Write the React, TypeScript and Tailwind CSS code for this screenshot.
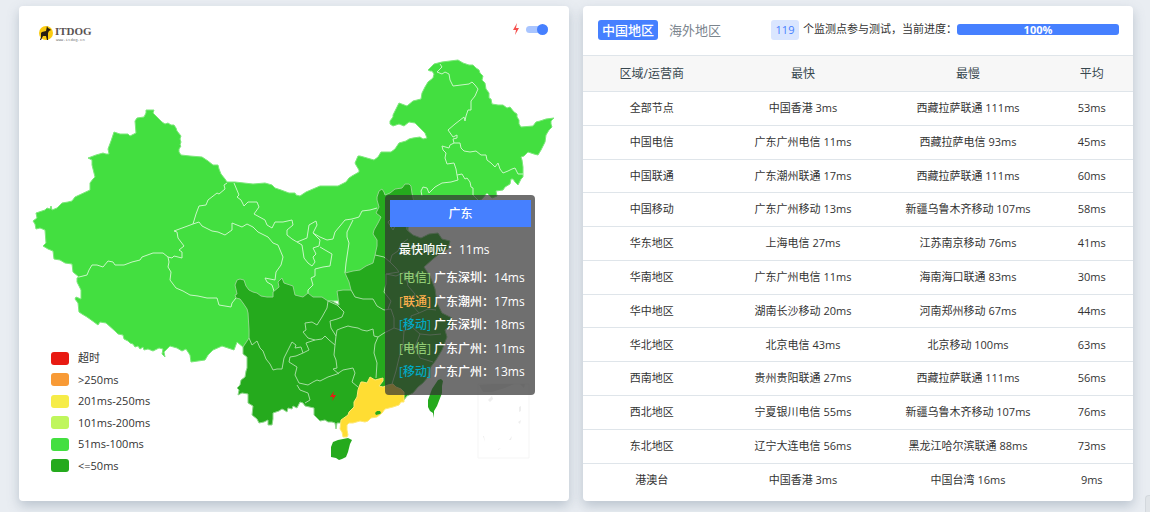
import React, { useState } from "react";

const rows = [
  ["全部节点", "中国香港 3ms", "西藏拉萨联通 111ms", "53ms"],
  ["中国电信", "广东广州电信 11ms", "西藏拉萨电信 93ms", "45ms"],
  ["中国联通", "广东潮州联通 17ms", "西藏拉萨联通 111ms", "60ms"],
  ["中国移动", "广东广州移动 13ms", "新疆乌鲁木齐移动 107ms", "58ms"],
  ["华东地区", "上海电信 27ms", "江苏南京移动 76ms", "41ms"],
  ["华南地区", "广东广州电信 11ms", "海南海口联通 83ms", "30ms"],
  ["华中地区", "湖南长沙移动 20ms", "河南郑州移动 67ms", "44ms"],
  ["华北地区", "北京电信 43ms", "北京移动 100ms", "63ms"],
  ["西南地区", "贵州贵阳联通 27ms", "西藏拉萨联通 111ms", "56ms"],
  ["西北地区", "宁夏银川电信 55ms", "新疆乌鲁木齐移动 107ms", "76ms"],
  ["东北地区", "辽宁大连电信 56ms", "黑龙江哈尔滨联通 88ms", "73ms"],
  ["港澳台", "中国香港 3ms", "中国台湾 16ms", "9ms"],
];

const legend = [
  { color: "bg-[#e81a12]", label: "超时" },
  { color: "bg-[#f89a36]", label: ">250ms" },
  { color: "bg-[#f6ec48]", label: "201ms-250ms" },
  { color: "bg-[#bff65c]", label: "101ms-200ms" },
  { color: "bg-[#43df40]", label: "51ms-100ms" },
  { color: "bg-[#25aa1d]", label: "<=50ms" },
];

const lines = [
  { isp: "电信", color: "text-[#91cc75]", city: "广东深圳", ms: 14 },
  { isp: "联通", color: "text-[#ffb04d]", city: "广东潮州", ms: 17 },
  { isp: "移动", color: "text-[#00a9c4]", city: "广东深圳", ms: 18 },
  { isp: "电信", color: "text-[#91cc75]", city: "广东广州", ms: 11 },
  { isp: "移动", color: "text-[#00a9c4]", city: "广东广州", ms: 13 },
];

// north and west, 51ms-100ms
const lightArea =
  "146,110 154,110 153,113 157,117 159,119 162,122 165,124 168,123 171,125 174,125 176,128 177,131 181,136 180,139 181,142 180,145 181,146 179,149 179,152 181,155 190,156 202,157 208,161 213,165 218,165 219,169 221,174 225,179 227,182 235,182 244,183 253,184 265,183 272,185 275,188 281,190 289,193 295,193 296,195 300,196 306,192 313,189 320,186 338,186 346,182 349,178 352,176 359,172 359,170 356,165 355,163 358,156 360,156 374,160 378,157 381,152 391,152 395,149 397,146 399,143 406,141 409,139 413,138 420,137 423,139 427,138 425,133 420,128 415,123 409,122 404,126 399,124 393,126 390,124 390,121 393,117 393,115 396,109 399,103 407,106 413,101 421,99 422,93 425,87 428,82 433,78 434,74 432,71 430,71 428,70 434,64 442,62 450,61 458,60 463,63 469,65 473,65 476,68 479,70 480,73 483,76 482,80 485,83 486,89 489,93 489,98 491,99 492,104 498,105 503,105 507,108 510,107 514,112 517,114 517,117 519,120 519,124 521,127 533,126 536,122 540,121 546,119 554,118 551,121 551,124 552,127 549,130 546,135 545,142 541,150 538,155 534,154 528,152 524,156 521,157 522,160 523,167 523,177 521,179 518,185 515,182 513,179 511,179 510,184 505,187 503,190 496,191 497,196 492,198 487,193 482,199 470,206 455,216 440,214 425,222 408,227 408,240 375,300 328,301 280,310 249,343 243,347 237,342 234,350 228,348 222,346 213,350 208,355 205,360 191,362 190,355 186,349 182,351 177,348 170,346 164,352 165,357 162,354 163,349 159,348 153,351 148,349 144,350 143,347 140,349 138,346 135,347 133,344 130,343 128,341 124,339 123,335 118,334 115,331 106,323 100,322 98,325 94,322 87,317 82,314 79,312 78,303 75,299 76,297 81,299 81,290 77,282 77,278 79,277 73,272 72,264 65,263 60,260 54,259 53,251 48,249 43,246 46,243 45,230 40,228 36,229 35,224 33,221 37,218 36,213 45,210 47,208 50,209 51,206 52,210 57,208 62,203 68,202 72,201 75,197 90,190 90,183 93,179 95,177 92,165 92,160 88,158 96,155 103,153 106,154 109,154 108,149 111,141 114,132 120,134 128,134 130,136 134,134 136,133 135,121 137,118 144,117 146,113";

// south and east, <=50ms
const darkArea =
  "377,200 377,197 379,191 382,189 384,192 385,195 390,193 395,189 402,188 405,184 409,184 411,186 412,193 413,198 415,206 412,216 405,222 407,230 413,235 421,238 429,234 438,233 442,239 450,241 448,249 439,254 433,259 424,267 430,276 435,289 437,303 442,313 452,318 452,325 445,330 447,337 442,350 436,360 430,368 428,377 423,383 418,387 413,393 407,396 404,400 395,400 380,400 366,405 347,420 341,423 337,423 336,429 335,423 332,422 328,422 325,420 320,421 314,415 314,408 305,406 303,403 300,402 297,408 293,406 292,409 288,408 287,412 284,410 282,409 279,411 273,413 273,419 272,425 268,425 268,420 264,422 259,423 257,419 252,415 253,406 248,403 248,394 242,393 238,395 239,390 237,388 240,385 241,380 245,377 246,371 247,368 247,357 243,354 243,347 247,341 249,338 249,330 248,313 247,309 243,303 240,299 236,298 235,295 237,294 235,285 237,280 240,279 244,280 246,286 249,290 253,292 257,293 261,296 267,297 273,297 273,292 279,287 278,282 282,278 284,283 293,286 295,295 303,297 308,293 313,297 322,297 328,301 332,301 339,305 338,298 337,291 343,290 351,290 349,282 345,273 353,271 360,270 366,266 373,263 375,255 377,246 377,240 373,234 374,230 378,223 381,217 376,213 379,207";

const guangdong =
  "359,387 361,382 363,382 367,383 369,379 370,377 375,380 383,378 383,381 379,386 383,387 388,385 393,384 396,387 401,389 404,392 404,398 404,402 401,402 399,405 393,407 385,409 382,413 377,417 371,418 368,421 365,422 360,421 353,423 349,423 347,425 347,430 348,435 347,437 343,437 342,432 340,429 341,420 348,415 349,412 354,407 354,402 357,397 358,390";

const lightBorders = [
  "79,277 83,276 87,275 89,270 92,265 97,265 103,267 108,261 113,262 115,265 124,265 132,262 140,260 142,257 153,253 163,253 168,257 172,258 174,256 182,258 182,252 179,250 184,246 178,238 177,232 174,231 193,224 196,214 199,206 206,205 208,200 217,193 219,194 225,189 224,185 227,183",
  "234,183 239,195 237,197 241,200 244,206 248,202 257,202 259,207 254,214 265,220 267,225 272,228 275,222 283,222 292,220 293,225 287,230 287,235 292,239 297,242 307,238 309,225 316,221 317,225 313,233 320,237 327,240 333,239 335,232 340,226 345,220 352,219 359,217 362,211 370,210 377,208",
  "168,257 169,262 168,267 171,272 170,280 176,288 183,291 190,295 198,296 207,298 213,298 217,298 219,305 225,306 231,307 232,303 236,298",
  "193,224 199,222 202,226 212,231 218,232 225,235 232,230 232,223 242,227 247,224 253,227 258,232 268,237 273,243 278,245 283,257 281,265 276,272 275,280 265,278 267,282 272,285 274,291",
  "297,242 302,245 304,258 308,263 312,266 315,262 313,257 316,254 313,248 319,246 320,240 313,233",
  "320,247 325,250 332,254 330,266 323,267 315,269 315,276 311,278 313,285 308,290 308,293",
  "353,220 350,226 347,232 347,237 349,243 346,263 345,273",
  "440,64 442,67 437,72 442,74 445,72 449,74 450,80 453,86 461,85 469,84 472,82 475,85 478,89 475,96 471,101 471,110 468,110 466,116 465,121 464,117 455,124 448,130 453,137 457,135 457,138 453,139 454,143 460,143 461,148 464,151 470,152 476,151 481,155 486,155 487,160 491,163 495,167 498,163 500,169 503,173 508,171 512,169 515,168 518,174 523,174",
  "454,143 450,145 449,148 442,146 443,150 446,153 445,158 447,164 454,163 456,169 457,175 462,174 465,179 467,178 470,182 471,187 473,188 473,195 478,200",
  "457,175 458,180 451,182 442,183 435,187 429,193 427,188 423,187 421,191 422,196",
];

const darkBorders = [
  "249,338 252,345 257,341 260,348 263,351 266,359 270,364 273,370 277,369 282,369 284,358 288,350 292,342 296,345 295,348 301,347 303,353 309,350 306,343 315,340 322,339 325,336 329,340 335,345 334,355 336,360 337,368",
  "303,353 296,356 290,357 289,362 297,367 295,375 299,383 308,385 313,382 317,380 320,381 328,377 337,374 343,370 353,368 355,373 352,382 358,387",
  "297,385 300,390 308,393 310,400 305,403",
  "328,301 327,308 322,317 317,325 312,322 305,323 306,330 303,332 308,338 315,340",
  "328,301 337,305 344,312 342,317 337,319 330,321 331,328 336,336 335,345",
  "336,336 337,330 342,328 348,326 352,327 358,328 362,330 367,331 373,329 374,336 378,337 375,344 374,353 377,363 376,378",
  "337,368 333,369 339,374",
  "351,290 355,297 363,299 373,299 377,306 384,310 391,309 394,318 394,328 384,333 378,337",
  "375,255 384,257 390,262 396,268 399,272 386,274 386,284 384,292 391,301 388,309",
  "390,262 392,255 398,251 401,244 408,239",
  "386,274 396,276 405,272 414,275 420,272",
  "405,272 408,286 415,294 412,305 419,313 428,309 436,310",
  "394,328 404,331 412,327 420,334 430,335 441,334",
  "412,327 411,316 419,313",
  "404,331 403,345 399,358 396,371 392,384",
  "420,334 415,347 420,358 433,362",
  "403,345 412,351 415,347",
  "388,222 392,218 396,224 393,230 388,222",
];

function ChinaMap() {
  return (
    <svg
      viewBox="19 6 550 495"
      className="block w-full"
      strokeLinejoin="round"
      strokeWidth="1"
    >
      <polygon points={lightArea} fill="#43df40" stroke="#7be879" />
      {lightBorders.map((p) => (
        <polyline key={p} points={p} fill="none" stroke="#c8f7c6" />
      ))}
      <polygon points={darkArea} fill="#25aa1d" stroke="#8fd68b" />
      {darkBorders.map((p) => (
        <polyline key={p} points={p} fill="none" stroke="#a3dda0" />
      ))}
      <polygon points={guangdong} fill="#ffdd33" stroke="#ffe873" />
      <path d="M375 413l2-2 3 0 1 2-1 1-4 1z" fill="#25aa1d" />
      <polygon
        points="333,442 338,440 343,439 348,438 352,440 350,444 348,452 346,457 342,459 339,460 336,458 331,457 331,447"
        fill="#25aa1d"
      />
      <polygon
        points="438,380 441,379 443,381 442,386 442,393 437,406 434,411 434,418 433,413 430,411 428,407 428,400 432,389"
        fill="#25aa1d"
      />
      <rect x="478" y="384" width="51" height="74" fill="none" stroke="#f5f5f5" />
      <path
        d="M479 385l13-1 22 0-9 4-13 4-9 0zM520 384l5 0-1 4zM488 400l4-4 1 3-3 3zM519 407l2-1 0 5-2 1zM518 422l3-2-1 4zM509 440l3-4-1 4zM483 436l1 0 1 6zM498 449l3-1-3 2z"
        fill="#eeeeee"
      />
      <path d="M334 391l-4 6 3 0-1 4 4-6-3 0z" fill="#e81a12" />
    </svg>
  );
}

function Logo() {
  return (
    <svg width="54" height="18" viewBox="0 0 54 18" className="absolute left-5 top-[19px]">
      <circle cx="7" cy="8" r="7" fill="#fbcb0f" />
      <path
        d="M8 1l1 2 2 1 1 1-2 1-1 2 0 3 0 4-1 0-1-4-3 0-1 2-1 2-1 0 1-3 0-4 1-1 4-1z"
        fill="#261d10"
      />
      <text x="16" y="10" fontSize="11" fill="#5a5252" fontFamily="Liberation Serif, serif" fontWeight="bold">
        ITDOG
      </text>
      <text x="17" y="16" fontSize="4" fill="#777" fontFamily="Liberation Mono, monospace">
        www.itdog.cn
      </text>
    </svg>
  );
}

function Tooltip() {
  return (
    <div className="absolute left-[366px] top-[189px] w-[150px] h-[200px] rounded bg-[#323232]/70 pt-[5px] pl-[5px] pr-1 text-xs font-medium text-white">
      <div className="h-[27px] bg-[#4680ff] text-center leading-7">广东</div>
      <div className="mt-[13px] ml-[9px] leading-5">最快响应：11ms</div>
      <ul className="mt-2 ml-[9px] flex h-[114px] flex-col justify-between">
        {lines.map((l, i) => (
          <li key={i} className="leading-5 whitespace-nowrap">
            <span className={l.color}>[{l.isp}]</span> {l.city}：{l.ms}ms
          </li>
        ))}
      </ul>
    </div>
  );
}

function MapCard() {
  const [on, setOn] = useState(true);

  return (
    <section className="relative flex-1 rounded bg-white shadow-[0_5px_12px_rgba(100,120,140,0.35)]">
      <ChinaMap />
      <Logo />
      <label className="absolute right-[21px] top-[17px] flex items-center gap-[6px]">
        <svg width="8" height="12" viewBox="0 0 8 12">
          <path d="M5 0L1 7l3 0-1 5 4-7-3 0z" fill="#f5504e" />
        </svg>
        <input
          type="checkbox"
          aria-label="闪电"
          checked={on}
          onChange={() => setOn(!on)}
          className="peer sr-only"
        />
        <span className="flex h-[7px] w-[22px] items-center justify-start rounded-full bg-[#a9c5ff] peer-checked:justify-end">
          <span className="size-[11px] rounded-full bg-[#4680ff]" />
        </span>
      </label>
      <ul className="absolute bottom-[28px] left-8 flex h-[122px] flex-col justify-between text-[11px] text-[#333]">
        {legend.map((item) => (
          <li key={item.label} className="flex h-[14px] items-center gap-[9px]">
            <span className={`h-[13px] w-[18px] rounded-[3px] ${item.color}`} />
            <span className="leading-3">{item.label}</span>
          </li>
        ))}
      </ul>
      <Tooltip />
    </section>
  );
}

function TableCard() {
  return (
    <section className="flex-1 overflow-hidden rounded bg-white pb-[5px] shadow-[0_5px_12px_rgba(100,120,140,0.35)]">
      <div className="flex h-[49px] items-center pb-[2px] pl-[15px] pr-[14px]">
        <button className="h-5 rounded-[3px] bg-[#4680ff] px-1 text-[13px] leading-5 font-medium text-white">
          中国地区
        </button>
        <button className="ml-[11px] h-5 text-[13px] leading-5 text-[#7b858e]">海外地区</button>
        <div className="ml-auto flex items-center text-[11px] text-[#333]">
          <span className="h-5 w-7 rounded-[3px] bg-[#dae6ff] text-center leading-5 text-[#4680ff]">
            119
          </span>
          <span className="ml-1 whitespace-nowrap">个监测点参与测试，当前进度：</span>
          <div
            role="progressbar"
            aria-valuenow={100}
            className="h-[11px] w-[162px] rounded-[3px] bg-[#4680ff] text-center leading-[11px] font-bold text-white"
          >
            100%
          </div>
        </div>
      </div>
      <table className="h-[441px] w-full table-fixed border-collapse text-center text-[11px] text-[#333]">
        <thead>
          <tr className="h-[36px] border-y border-[#dfe5ea] bg-[#f7f7f7] text-xs text-[#37474f]">
            <th className="w-1/4 font-normal">区域/运营商</th>
            <th className="w-[30%] font-normal">最快</th>
            <th className="w-[30%] font-normal">最慢</th>
            <th className="w-[15%] font-normal">平均</th>
          </tr>
        </thead>
        <tbody>
          {rows.map((row) => (
            <tr key={row[0]} className="border-b border-[#dfe5ea] last:border-b-0">
              {row.map((cell, i) => (
                <td key={i} className="p-0 whitespace-nowrap">
                  {cell}
                </td>
              ))}
            </tr>
          ))}
        </tbody>
      </table>
    </section>
  );
}

function App() {
  return (
    <main className="flex min-h-screen items-start gap-[14px] bg-[#e9edf2] pt-[6px] pr-[17px] pl-[19px] font-['Open_Sans','Noto_Sans_CJK_SC',sans-serif]">
      <MapCard />
      <TableCard />
      <div className="fixed right-0 bottom-0 h-[17px] w-[5px] rounded-tl-sm border-t border-l border-[#d3d8dd] bg-[#e0e4e8]" />
    </main>
  );
}

export default App;
